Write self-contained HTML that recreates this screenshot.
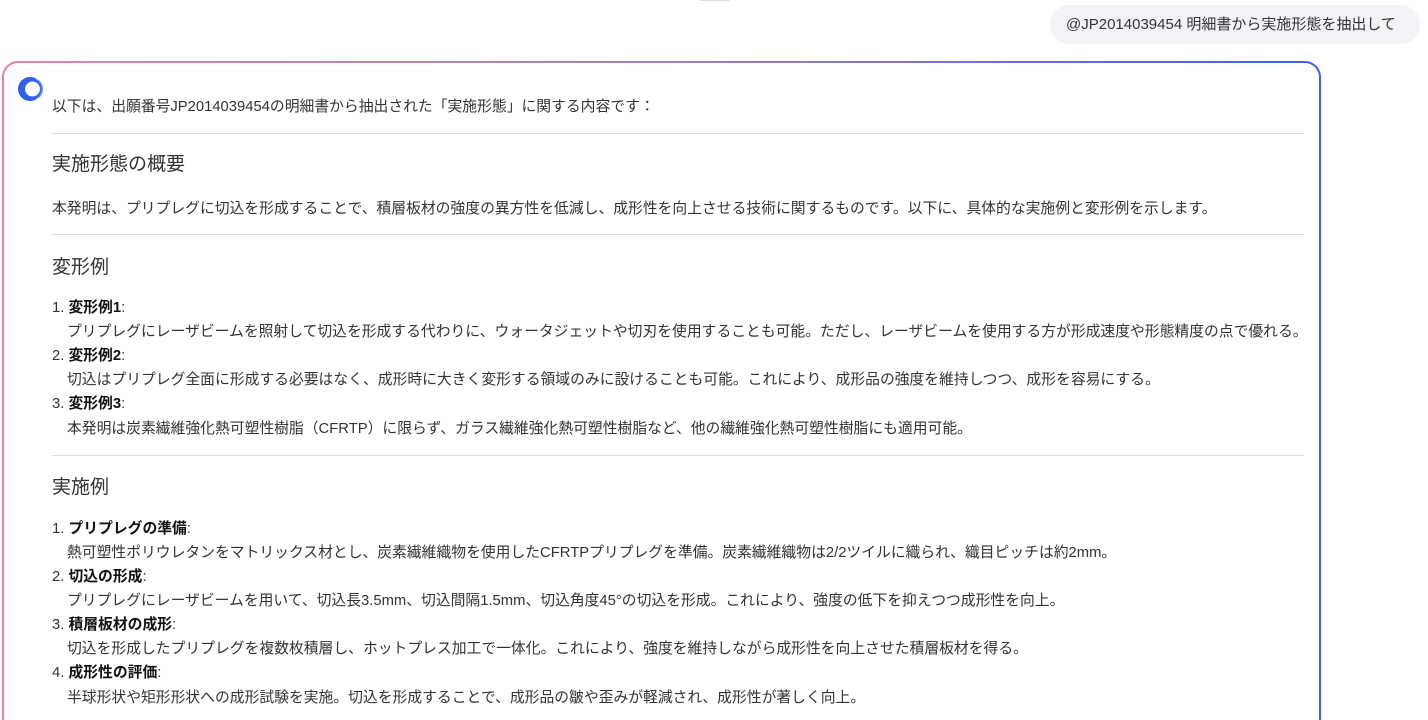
<!DOCTYPE html>
<html style="height:720px;overflow:hidden"><head><meta charset="utf-8"><style>
*{margin:0;padding:0;box-sizing:border-box}
body{width:1428px;height:720px;overflow:hidden;background:#fff;font-family:"Liberation Sans","Noto Sans CJK JP",sans-serif;color:#333;font-size:14.8px;position:relative}
.bubble{position:absolute;left:1050px;top:5px;width:370px;height:39px;background:#f1f3f6;border-radius:20px;font-size:15px;line-height:39px;padding-left:16px;color:#333}
.card{position:absolute;left:2px;top:61px;width:1319px;height:680px;border:2px solid transparent;border-radius:16px;background:linear-gradient(#fff,#fff) padding-box,linear-gradient(90deg,#e283a8,#a77fc0 50%,#3a62e6) border-box}
.l{position:absolute;left:52px;white-space:nowrap;line-height:20px}
.h{font-size:19px}
.hr{position:absolute;left:52px;width:1252px;height:1px;background:#ddd}
.i{left:67px}
b{font-weight:bold;color:#111}
.top{position:absolute;left:700px;top:0;width:30px;height:1px;background:#ddd}
</style></head><body>
<div class="top"></div>
<div class="bubble">@JP2014039454 明細書から実施形態を抽出して</div>
<div class="card"></div>
<svg style="position:absolute;left:17px;top:76px" width="26" height="26" viewBox="0 0 26 26">
<path fill-rule="evenodd" d="M13 1 A12 12 0 1 0 13.01 1Z M15.5 5.5 A7.5 7.5 0 1 1 15.49 5.5Z" fill="#2f62e8"/>
<path d="M18 3 A11 11 0 0 1 18 23 A8 10 0 0 0 18 3Z" fill="#6a9af2"/>
</svg>
<div class="l" style="top:97px">以下は、出願番号JP2014039454の明細書から抽出された「実施形態」に関する内容です：</div>
<div class="hr" style="top:133px"></div>
<div class="l h" style="top:155px">実施形態の概要</div>
<div class="l" style="top:199px">本発明は、プリプレグに切込を形成することで、積層板材の強度の異方性を低減し、成形性を向上させる技術に関するものです。以下に、具体的な実施例と変形例を示します。</div>
<div class="hr" style="top:234px"></div>
<div class="l h" style="top:258px">変形例</div>
<div class="l" style="top:298px">1. <b>変形例1</b>:</div>
<div class="l i" style="top:322px">プリプレグにレーザビームを照射して切込を形成する代わりに、ウォータジェットや切刃を使用することも可能。ただし、レーザビームを使用する方が形成速度や形態精度の点で優れる。</div>
<div class="l" style="top:346px">2. <b>変形例2</b>:</div>
<div class="l i" style="top:370px">切込はプリプレグ全面に形成する必要はなく、成形時に大きく変形する領域のみに設けることも可能。これにより、成形品の強度を維持しつつ、成形を容易にする。</div>
<div class="l" style="top:394px">3. <b>変形例3</b>:</div>
<div class="l i" style="top:419px">本発明は炭素繊維強化熱可塑性樹脂（CFRTP）に限らず、ガラス繊維強化熱可塑性樹脂など、他の繊維強化熱可塑性樹脂にも適用可能。</div>
<div class="hr" style="top:455px"></div>
<div class="l h" style="top:478px">実施例</div>
<div class="l" style="top:519px">1. <b>プリプレグの準備</b>:</div>
<div class="l i" style="top:543px">熱可塑性ポリウレタンをマトリックス材とし、炭素繊維織物を使用したCFRTPプリプレグを準備。炭素繊維織物は2/2ツイルに織られ、織目ピッチは約2mm。</div>
<div class="l" style="top:567px">2. <b>切込の形成</b>:</div>
<div class="l i" style="top:591px">プリプレグにレーザビームを用いて、切込長3.5mm、切込間隔1.5mm、切込角度45°の切込を形成。これにより、強度の低下を抑えつつ成形性を向上。</div>
<div class="l" style="top:615px">3. <b>積層板材の成形</b>:</div>
<div class="l i" style="top:639px">切込を形成したプリプレグを複数枚積層し、ホットプレス加工で一体化。これにより、強度を維持しながら成形性を向上させた積層板材を得る。</div>
<div class="l" style="top:663px">4. <b>成形性の評価</b>:</div>
<div class="l i" style="top:688px">半球形状や矩形形状への成形試験を実施。切込を形成することで、成形品の皺や歪みが軽減され、成形性が著しく向上。</div>
</body></html>
